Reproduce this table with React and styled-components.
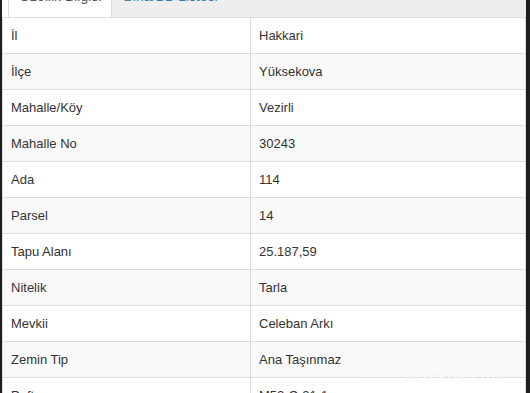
import React from "react";
import styled, { createGlobalStyle } from "styled-components";

const rows = [
  ["İl", "Hakkari"],
  ["İlçe", "Yüksekova"],
  ["Mahalle/Köy", "Vezirli"],
  ["Mahalle No", "30243"],
  ["Ada", "114"],
  ["Parsel", "14"],
  ["Tapu Alanı", "25.187,59"],
  ["Nitelik", "Tarla"],
  ["Mevkii", "Celeban Arkı"],
  ["Zemin Tip", "Ana Taşınmaz"],
  ["Pafta", "M52-C-21-1"],
];

const GlobalStyle = createGlobalStyle`
  html, body {
    margin: 0;
    padding: 0;
    background: #1e1e1e;
    overflow: hidden;
  }
`;

const Frame = styled.div`
  position: relative;
  width: 530px;
  height: 393px;
  padding: 0 4px 0 2px;
  box-sizing: border-box;
  background: #1e1e1e;
  overflow: hidden;
`;

const Panel = styled.div`
  background: #fff;
  height: 100%;
  overflow: hidden;
  font-family: "Liberation Sans", Arial, sans-serif;
  color: #333;
`;

const Tabs = styled.ul`
  list-style: none;
  margin: 0;
  padding: 0 0 0 6px;
  height: 17px;
  display: flex;
  align-items: flex-end;
  overflow: hidden;
  background: linear-gradient(to right, #fff 6px, #eee 6px);
`;

const Tab = styled.li`
  flex: ${(p) => (p.$grow ? 1 : "none")};
  height: 41px;
  flex-shrink: 0;
  box-sizing: border-box;
  padding: 10px 10px 11px;
  line-height: 20px;
  font-size: 14px;
  white-space: nowrap;
  background: ${(p) => (p.$active ? "#fff" : "#eee")};
  color: ${(p) => (p.$active ? "#555" : "#337ab7")};
  border-left: ${(p) => (p.$active ? "1px solid #ddd" : "none")};
  border-right: ${(p) => (p.$active ? "1px solid #ddd" : "none")};
  padding-left: ${(p) => (p.$active ? "10px" : "11px")};
`;

const Table = styled.table`
  width: 100%;
  border-collapse: collapse;
  table-layout: fixed;
  font-size: 13px;
`;

const Row = styled.tr`
  background: ${(p) => (p.$striped ? "#f9f9f9" : "#fff")};
`;

const Cell = styled.td`
  border: 1px solid #ddd;
  padding: 8px 8px;
  line-height: 19px;
  vertical-align: top;
  white-space: nowrap;
`;

const Watermark = styled.div`
  position: absolute;
  left: 366px;
  top: 367px;
  font-family: "Liberation Sans", Arial, sans-serif;
  font-size: 16px;
  font-weight: bold;
  letter-spacing: 0.5px;
  color: rgba(255, 255, 255, 0.8);
  text-shadow: 0 0 1px rgba(0, 0, 0, 0.08);
  pointer-events: none;
`;

export default function App() {
  return (
    <>
      <GlobalStyle />
      <Frame>
        <Panel>
          <Tabs>
            <Tab $active>Özellik Bilgisi</Tab>
            <Tab $grow>Bina/BB Listesi</Tab>
          </Tabs>
          <Table>
            <colgroup>
              <col style={{ width: "248px" }} />
              <col />
            </colgroup>
            <tbody>
              {rows.map(([label, value], i) => (
                <Row key={label} $striped={i % 2 === 1}>
                  <Cell>{label}</Cell>
                  <Cell>{value}</Cell>
                </Row>
              ))}
            </tbody>
          </Table>
        </Panel>
        <Watermark>internetekoy.com</Watermark>
      </Frame>
    </>
  );
}
